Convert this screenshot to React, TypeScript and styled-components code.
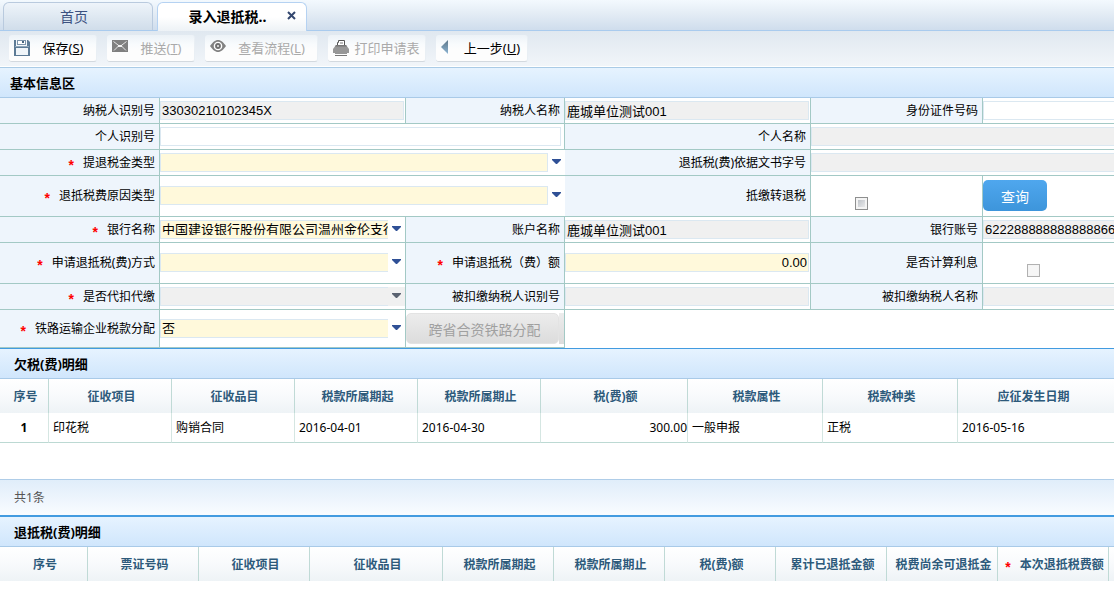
import React from 'react';
import styled, { createGlobalStyle, css } from 'styled-components';

const GlobalStyle = createGlobalStyle`
  *, *::before, *::after { box-sizing: border-box; }
  body {
    margin: 0;
    background: #fff;
    color: #000;
    font: 12px/16px "Noto Sans", "Noto Sans CJK SC", sans-serif;
  }
  button, input, select { font: inherit; margin: 0; }
`;

const line = '#a3c9c5';

const Page = styled.main`
  overflow: hidden;
`;

/* ---------- window tabs ---------- */

const TabBar = styled.nav`
  display: flex;
  align-items: flex-end;
  gap: 4px;
  height: 31px;
  padding: 0 3px;
  border-bottom: 1px solid #a9cbee;
  background: linear-gradient(#f3f9fe, #e2ebf4 50%, #cfdded);
`;

const Tab = styled.div<{ $active?: boolean }>`
  display: flex;
  align-items: center;
  width: 150px;
  height: 28px;
  border: 1px solid #b9cade;
  border-bottom: 0;
  border-radius: 6px 6px 0 0;
  background: linear-gradient(#eef4fa, #d0ddea);
  ${(p) =>
    p.$active &&
    css`
      height: 29px;
      margin-bottom: -1px;
      border-color: #b5d2f2;
      background: linear-gradient(#fff 50%, #edf2f6);
    `}
`;

const TabTitle = styled.button<{ $active?: boolean }>`
  flex: 1;
  padding: 0;
  border: 0;
  background: none;
  color: ${(p) => (p.$active ? '#000' : '#3c5180')};
  font-size: 14px;
  line-height: 20px;
  font-weight: ${(p) => (p.$active ? 700 : 400)};
  text-align: center;
  padding-left: ${(p) => (p.$active ? 20 : 0)}px;
  padding-right: ${(p) => (p.$active ? 0 : 8)}px;
`;

const TabClose = styled.button`
  display: flex;
  padding: 0 10px 4px;
  border: 0;
  background: none;
`;

/* ---------- toolbar ---------- */

const Toolbar = styled.div`
  display: flex;
  gap: 10px;
  height: 36px;
  padding: 4px 9px;
  border-bottom: 1px solid #fff;
  background: linear-gradient(#e0e8f0, #f1f5f9);
`;

const ToolButton = styled.button<{ $width: number }>`
  display: flex;
  align-items: flex-start;
  width: ${(p) => p.$width}px;
  height: 27px;
  padding: 5px 0 0 5px;
  border: 1px solid #e9eff4;
  border-left-color: #edf2f7;
  border-bottom-color: #d3d9df;
  border-width: 0 1px 1px 0;
  border-radius: 3px;
  background: linear-gradient(#ecf2f7, #f8fbfd 35%, #fdfdfd 60%);
  color: #000;
  font-size: 13px;
  line-height: 16px;

  &:disabled { color: #aaa; }
  svg { flex: none; }
`;

const ToolText = styled.span`
  flex: 1;
  text-align: center;
  white-space: nowrap;
`;

/* ---------- section headings ---------- */

const SectionTitle = styled.h2<{ $accent?: number; $indent?: number }>`
  margin: 0;
  padding: 5px ${(p) => p.$indent ?? 14}px 4px;
  border-top: ${(p) => (p.$accent ? `${p.$accent}px solid #429be0` : '1px solid #aacbe6')};
  border-bottom: 1px solid #a9cae8;
  background: linear-gradient(#e6f3ff, #d0e6fc);
  font-size: 13px;
  line-height: 20px;
  font-weight: 700;
`;

/* ---------- form ---------- */

const FormGrid = styled.form`
  display: grid;
  grid-template-columns: 160px 246px 159px 246px 172px minmax(246px, 1fr);
`;

const cellHeights = { normal: 26, tall: 41, last: 38 };

const cell = css<{ $span?: number; $size?: keyof typeof cellHeights; $open?: boolean }>`
  display: flex;
  align-items: center;
  grid-column: span ${(p) => p.$span ?? 1};
  min-width: 0;
  height: ${(p) => cellHeights[p.$size ?? 'normal']}px;
  border-bottom: 1px solid ${line};
  border-right: ${(p) => (p.$open ? 0 : 1)}px solid ${line};
`;

const LabelCell = styled.div`
  ${cell}
  justify-content: flex-end;
  padding-right: 4px;
  background: #eef5fc;
  white-space: nowrap;
`;

const ValueCell = styled.div`
  ${cell}
  padding-bottom: ${(p) => (p.$size === 'tall' ? 1 : 0)}px;
  background: #fff;
`;

const CheckCell = styled(ValueCell)`
  align-items: flex-end;
  padding: 0 0 6px 44px;
`;

const Star = styled.span`
  display: inline-block;
  height: 16px;
  padding-top: 2px;
  margin-right: 9px;
  vertical-align: top;
  color: #f00;
  font: 700 14px/16px "Liberation Sans", sans-serif;
`;

const fieldFont = css`
  font: 13px/17px "Liberation Sans", "Noto Sans CJK SC", sans-serif;
  color: #000;
`;

const TextBox = styled.input<{ $required?: boolean; $right?: boolean; $wide?: boolean }>`
  ${fieldFont}
  flex: 1;
  min-width: 0;
  height: 19px;
  margin-right: ${(p) => (p.$wide ? 3 : 1)}px;
  padding: 0 1px;
  border: 1px solid #dbe8f1;
  border-radius: 0;
  background: ${(p) => (p.$required ? '#fff9db' : '#fff')};
  text-align: ${(p) => (p.$right ? 'right' : 'left')};
  outline: 0;

  &:read-only { background: #f0f0f0; }
`;

const Combo = styled.div<{ $disabled?: boolean }>`
  display: flex;
  flex: 1;
  min-width: 0;
  align-items: center;
  height: 19px;
  background: ${(p) => (p.$disabled ? '#f0f0f0' : '#fff')};
`;

const ComboSelect = styled.select<{ $boxed?: boolean }>`
  ${fieldFont}
  appearance: none;
  flex: 1;
  min-width: 0;
  height: 19px;
  padding: 0 0 3px 1px;
  border: 1px solid #dbe8f1;
  border-right-width: ${(p) => (p.$boxed ? 1 : 0)}px;
  border-radius: 0;
  background: #fff9db;
  outline: 0;

  &:disabled { background: #f0f0f0; opacity: 1; }
`;

const CheckBox = styled.input<{ $faint?: boolean }>`
  appearance: none;
  width: 13px;
  height: 13px;
  border: 1px solid ${(p) => (p.$faint ? '#b1b1b1' : '#8e8f8f')};
  background: ${(p) => (p.$faint ? '#f6f6f6' : 'linear-gradient(135deg, #b4b9c0, #f4f4f4)')};
  box-shadow: inset 0 0 0 ${(p) => (p.$faint ? 1 : 2)}px #f4f4f4;
`;

const QueryButton = styled.button`
  width: 64px;
  height: 31px;
  padding: 2px 0 0;
  border: 0;
  border-radius: 5px;
  background: linear-gradient(#4fa7ee, #3d95db);
  color: #fff;
  font-size: 14px;
`;

const SplitButton = styled.button`
  display: flex;
  flex: 1;
  height: 31px;
  padding: 0;
  border: 0;
  background: none;
  color: #a0a0a0;
  font-size: 14px;
  line-height: 29px;
  white-space: nowrap;
`;

const SplitFace = styled.span`
  flex: 1;
  height: 31px;
  padding: 2px 0 0 4px;
  border: 1px solid #e3e3e3;
  border-radius: 5px;
  background: linear-gradient(#ececec, #dcdcdc);
  text-align: center;
  line-height: 27px;
`;

const SplitEdge = styled.span`
  width: 5px;
  height: 31px;
  background: linear-gradient(#ececec, #dcdcdc);
`;

/* ---------- data tables ---------- */

const DataTable = styled.table`
  width: 100%;
  table-layout: fixed;
  border-collapse: separate;
  border-spacing: 0;
`;

const HeadCell = styled.th<{ $last?: boolean }>`
  height: 34px;
  padding: 2px ${(p) => (p.$last ? 10 : 0)}px 0 ${(p) => (p.$last ? 5 : 3)}px;
  border-right: ${(p) => (p.$last ? 0 : 1)}px solid #c0dad6;
  background: linear-gradient(#fff, #f8fafc 50%, #eef3f6);
  color: #2d5a7b;
  font-weight: 700;
  text-align: center;
  white-space: nowrap;
`;

const FillerCell = styled.td`
  height: 34px;
  padding: 0;
  background: linear-gradient(#fff, #f8fafc 50%, #eef3f6);
`;

const BodyCell = styled.td<{ $align?: string; $last?: boolean; $bold?: boolean }>`
  height: 30px;
  padding: 0 0 0 ${(p) => (p.$align ? 0 : 4)}px;
  border-right: ${(p) => (p.$last ? 0 : 1)}px solid #d5e6e2;
  border-bottom: 1px solid #bcd9d3;
  text-align: ${(p) => p.$align ?? 'left'};
  font-weight: ${(p) => (p.$bold ? 700 : 400)};
  white-space: nowrap;
`;

const TableFooter = styled.div`
  margin-top: 36px;
  padding: 10px 14px 9px;
  border-top: 1px solid #afcde8;
  background: linear-gradient(#e0edfa, #f9fcff);
  color: #555;
  line-height: 16px;
`;

/* ---------- icons ---------- */

const SaveIcon = () => (
  <svg width="16" height="16" viewBox="0 0 16 16">
    <path d="M0 0H14L16 2V16H0Z" fill="#5d7b96" />
    <path d="M2 0H13V6H2Z" fill="#f4f8fb" />
    <path d="M3 0H12V5H3Z" fill="#7d95ab" />
    <path d="M4 1H11V4H4Z" fill="#fff" />
    <path d="M8 1H10V3H8Z" fill="#48657f" />
    <path d="M2 8H14V15H2Z" fill="#f0f5f9" />
    <path d="M1 6.500H15" stroke="#90a8bc" />
  </svg>
);

const MailIcon = () => (
  <svg width="16" height="16" viewBox="0 0 16 16">
    <path d="M0 0H16V12H0Z" fill="#808080" />
    <path d="M1.500 1.500L8 6.500L14.500 1.500" fill="none" stroke="#e6e6e6" />
    <path d="M2 10.500L6.500 6M14 10.500L9.500 6" fill="none" stroke="#e6e6e6" />
    <path d="M6 5H10V7H6Z" fill="#f2f2f2" />
  </svg>
);

const EyeIcon = () => (
  <svg width="16" height="16" viewBox="0 0 16 16">
    <path d="M0 6C3 1.500 6 0 8 0C10 0 13 1.500 16 6C13 10.500 10 12 8 12C6 12 3 10.500 0 6Z" fill="#828282" />
    <circle cx="8" cy="6" r="4.300" fill="#fff" />
    <circle cx="8" cy="6" r="2.900" fill="#707070" />
    <circle cx="8" cy="6" r="1" fill="#eee" />
  </svg>
);

const PrintIcon = () => (
  <svg width="16" height="16" viewBox="0 0 16 16">
    <path d="M4.500 5V2.500H5.500V0.500H11.500V5" fill="#fff" stroke="#555" />
    <path d="M7 3H10" stroke="#777" />
    <path d="M3 5H13L16 9V13H14V14H2V13H0V9Z" fill="#979797" />
    <path d="M3 5H13L14 6.500H2Z" fill="#777" />
    <path d="M2 15.500H14" stroke="#777" />
  </svg>
);

const BackIcon = () => (
  <svg width="16" height="16" viewBox="0 0 16 16">
    <defs>
      <linearGradient id="back" x1="0" y1="0" x2="0" y2="1">
        <stop offset="0" stopColor="#5d7789" />
        <stop offset="1" stopColor="#8cb4d3" />
      </linearGradient>
    </defs>
    <path d="M7 0V14L0 7Z" fill="url(#back)" />
  </svg>
);

const CloseIcon = () => (
  <svg width="9" height="9" viewBox="0 0 9 9">
    <path d="M1 1L8 8M8 1L1 8" stroke="#33476f" strokeWidth="2" />
  </svg>
);

const ArrowIcon = ({ disabled }: { disabled?: boolean }) => (
  <svg width="17" height="19" viewBox="0 0 17 19">
    <path d="M4 6H13V7L9 11H8L4 7Z" fill={disabled ? '#5a6270' : '#2f5096'} />
  </svg>
);

/* ---------- composed parts ---------- */

type Size = keyof typeof cellHeights;

interface LabelProps {
  id: string;
  text: string;
  required?: boolean;
  size?: Size;
}

const Label = ({ id, text, required, size }: LabelProps) => (
  <LabelCell $size={size}>
    {required && <Star>*</Star>}
    <label htmlFor={id}>{text}</label>
  </LabelCell>
);

interface FieldProps {
  id: string;
  value?: string;
  readOnly?: boolean;
  required?: boolean;
  right?: boolean;
  size?: Size;
  span?: number;
  open?: boolean;
}

const Field = ({ id, value, readOnly, required, right, size, span, open }: FieldProps) => (
  <ValueCell $size={size} $span={span} $open={open}>
    <TextBox
      id={id}
      defaultValue={value}
      readOnly={readOnly}
      $required={required}
      $right={right}
      $wide={span === 2}
    />
  </ValueCell>
);

interface DropDownProps {
  id: string;
  value?: string;
  disabled?: boolean;
  size?: Size;
  wide?: boolean;
}

const DropDown = ({ id, value = '', disabled, size, wide }: DropDownProps) => (
  <ValueCell $size={size} $span={wide ? 2 : 1} $open={wide}>
    <Combo $disabled={disabled}>
      <ComboSelect id={id} disabled={disabled} $boxed={wide} defaultValue={value}>
        <option value={value}>{value}</option>
      </ComboSelect>
      <ArrowIcon disabled={disabled} />
    </Combo>
  </ValueCell>
);

const debtColumns = [
  { title: '序号', width: 49 },
  { title: '征收项目', width: 123 },
  { title: '征收品目', width: 123 },
  { title: '税款所属期起', width: 123 },
  { title: '税款所属期止', width: 123 },
  { title: '税(费)额', width: 147 },
  { title: '税款属性', width: 135 },
  { title: '税款种类', width: 135 },
  { title: '应征发生日期', width: undefined },
];

const debtRow = ['1', '印花税', '购销合同', '2016-04-01', '2016-04-30', '300.00', '一般申报', '正税', '2016-05-16'];

const refundColumns = [
  { title: '序号', width: 88 },
  { title: '票证号码', width: 111 },
  { title: '征收项目', width: 111 },
  { title: '征收品目', width: 133 },
  { title: '税款所属期起', width: 111 },
  { title: '税款所属期止', width: 111 },
  { title: '税(费)额', width: 111 },
  { title: '累计已退抵金额', width: 111 },
  { title: '税费尚余可退抵金', width: 111 },
  { title: '本次退抵税费额', width: 111, required: true },
];

export default function App() {
  return (
    <Page>
      <GlobalStyle />
      <TabBar>
        <Tab>
          <TabTitle type="button">首页</TabTitle>
        </Tab>
        <Tab $active>
          <TabTitle type="button" $active>录入退抵税..</TabTitle>
          <TabClose type="button" aria-label="关闭"><CloseIcon /></TabClose>
        </Tab>
      </TabBar>

      <Toolbar>
        <ToolButton type="button" $width={88}>
          <SaveIcon /><ToolText>保存(<u>S</u>)</ToolText>
        </ToolButton>
        <ToolButton type="button" $width={88} disabled>
          <MailIcon /><ToolText>推送(<u>T</u>)</ToolText>
        </ToolButton>
        <ToolButton type="button" $width={113} disabled>
          <EyeIcon /><ToolText>查看流程(<u>L</u>)</ToolText>
        </ToolButton>
        <ToolButton type="button" $width={98} disabled>
          <PrintIcon /><ToolText>打印申请表</ToolText>
        </ToolButton>
        <ToolButton type="button" $width={92}>
          <BackIcon /><ToolText>上一步(<u>U</u>)</ToolText>
        </ToolButton>
      </Toolbar>

      <SectionTitle $indent={10}>基本信息区</SectionTitle>
      <FormGrid>
        <Label id="payerId" text="纳税人识别号" />
        <Field id="payerId" value="33030210102345X" readOnly />
        <Label id="payerName" text="纳税人名称" />
        <Field id="payerName" value="鹿城单位测试001" readOnly />
        <Label id="idCard" text="身份证件号码" />
        <Field id="idCard" open />

        <Label id="personId" text="个人识别号" />
        <Field id="personId" span={2} />
        <Label id="personName" text="个人名称" />
        <Field id="personName" span={2} readOnly open />

        <Label id="refundType" text="提退税金类型" required />
        <DropDown id="refundType" wide />
        <Label id="docNumber" text="退抵税(费)依据文书字号" />
        <Field id="docNumber" span={2} readOnly open />

        <Label id="reasonType" text="退抵税费原因类型" required size="tall" />
        <DropDown id="reasonType" wide size="tall" />
        <Label id="offset" text="抵缴转退税" size="tall" />
        <CheckCell $size="tall"><CheckBox id="offset" type="checkbox" /></CheckCell>
        <ValueCell $size="tall" $open><QueryButton type="button">查询</QueryButton></ValueCell>

        <Label id="bank" text="银行名称" required />
        <DropDown id="bank" value="中国建设银行股份有限公司温州金伦支行" />
        <Label id="accountName" text="账户名称" />
        <Field id="accountName" value="鹿城单位测试001" readOnly />
        <Label id="account" text="银行账号" />
        <Field id="account" value="6222888888888888666" readOnly open />

        <Label id="method" text="申请退抵税(费)方式" required size="tall" />
        <DropDown id="method" size="tall" />
        <Label id="amount" text="申请退抵税（费）额" required size="tall" />
        <Field id="amount" value="0.00" required right size="tall" />
        <Label id="interest" text="是否计算利息" size="tall" />
        <CheckCell $size="tall" $open><CheckBox id="interest" type="checkbox" $faint disabled /></CheckCell>

        <Label id="withhold" text="是否代扣代缴" required />
        <DropDown id="withhold" disabled />
        <Label id="withheldId" text="被扣缴纳税人识别号" />
        <Field id="withheldId" readOnly />
        <Label id="withheldName" text="被扣缴纳税人名称" />
        <Field id="withheldName" readOnly open />

        <Label id="railway" text="铁路运输企业税款分配" required size="last" />
        <DropDown id="railway" value="否" size="last" />
        <ValueCell $size="last">
          <SplitButton type="button" disabled>
            <SplitFace>跨省合资铁路分配</SplitFace>
            <SplitEdge />
          </SplitButton>
        </ValueCell>
      </FormGrid>

      <SectionTitle $accent={1}>欠税(费)明细</SectionTitle>
      <DataTable>
        <colgroup>
          {debtColumns.map((c) => <col key={c.title} width={c.width} />)}
        </colgroup>
        <thead>
          <tr>
            {debtColumns.map((c, i) => (
              <HeadCell key={c.title} $last={i === debtColumns.length - 1}>{c.title}</HeadCell>
            ))}
          </tr>
        </thead>
        <tbody>
          <tr>
            {debtRow.map((value, i) => (
              <BodyCell
                key={i}
                $bold={i === 0}
                $align={i === 0 ? 'center' : i === 5 ? 'right' : undefined}
                $last={i === debtRow.length - 1}
              >
                {value}
              </BodyCell>
            ))}
          </tr>
        </tbody>
      </DataTable>
      <TableFooter>共1条</TableFooter>

      <SectionTitle $accent={2}>退抵税(费)明细</SectionTitle>
      <DataTable>
        <colgroup>
          {refundColumns.map((c) => <col key={c.title} width={c.width} />)}
          <col />
        </colgroup>
        <thead>
          <tr>
            {refundColumns.map((c) => (
              <HeadCell key={c.title}>
                {c.required && <Star>*</Star>}
                {c.title}
              </HeadCell>
            ))}
            <FillerCell />
          </tr>
        </thead>
      </DataTable>
    </Page>
  );
}
